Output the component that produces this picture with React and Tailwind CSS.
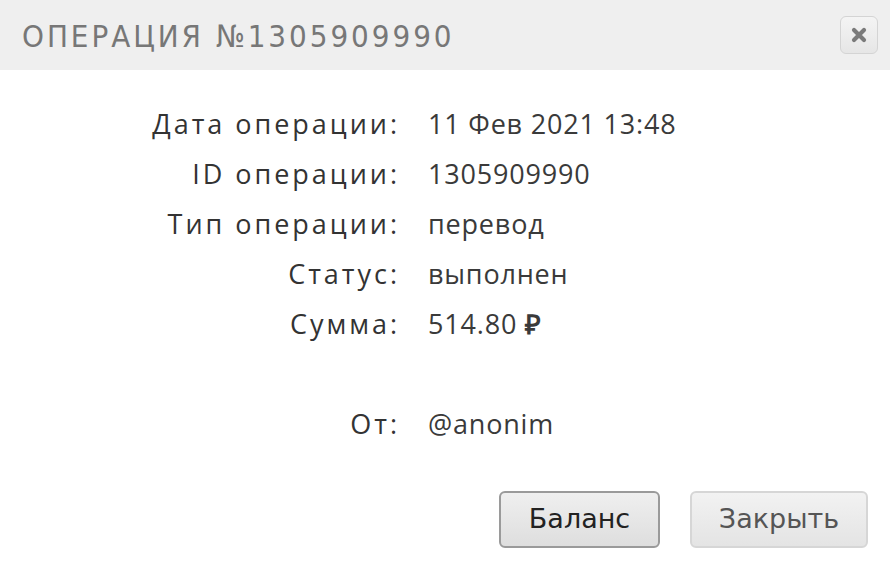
import React from 'react';

const rows = [
  ['Дата операции:', '11 Фев 2021 13:48'],
  ['ID операции:', '1305909990'],
  ['Тип операции:', 'перевод'],
  ['Статус:', 'выполнен'],
  ['Сумма:', <>514.80 <span className="font-bold">₽</span></>],
];

export default function App() {
  return (
    <div className="w-[890px] h-[562px] bg-white overflow-hidden">
      {/* Header */}
      <div className="h-[70px] bg-[#efefef] flex items-center justify-between pl-[22px] pr-[12px]">
        <h1 className="text-[31px] tracking-[0.095em] text-[#777] leading-none pt-[2px] [font-stretch:condensed] font-['DejaVu_Sans_Condensed','DejaVu_Sans',sans-serif]">
          ОПЕРАЦИЯ №1305909990
        </h1>
        <button className="w-[38px] h-[38px] rounded-[6px] border border-[#d4d4d4] bg-gradient-to-b from-[#f4f4f4] to-[#e6e6e6] flex items-center justify-center">
          <svg width="18" height="18" viewBox="0 0 18 18">
            <path d="M4 4 L14 14 M14 4 L4 14" stroke="#7a7a7a" strokeWidth="4.2" strokeLinecap="round" />
          </svg>
        </button>
      </div>

      {/* Details */}
      <div className="pt-[29px] text-[27px] text-[#333] font-['Open_Sans',sans-serif]">
        {rows.map(([label, value], i) => (
          <div key={i} className="flex h-[50px] items-center">
            <div className="w-[400px] text-right tracking-[0.11em]">{label}</div>
            <div className="pl-[28px] tracking-[0.03em] text-[#3a3a3a]">{value}</div>
          </div>
        ))}
        <div className="h-[50px]" />
        <div className="flex h-[50px] items-center">
          <div className="w-[400px] text-right tracking-[0.11em]">От:</div>
          <div className="pl-[28px] tracking-[0.03em] text-[#3a3a3a]">@anonim</div>
        </div>
      </div>

      {/* Buttons */}
      <div className="flex justify-end gap-[30px] pr-[22px] pt-[42px] font-['DejaVu_Sans',sans-serif] text-[27px]">
        <button className="w-[161px] h-[57px] rounded-[6px] border-2 border-[#9a9a9a] bg-gradient-to-b from-[#efefef] to-[#dedede] text-[#222]">
          Баланс
        </button>
        <button className="w-[178px] h-[57px] rounded-[6px] border-2 border-[#d6d6d6] bg-gradient-to-b from-[#f2f2f2] to-[#e4e4e4] text-[#555]">
          Закрыть
        </button>
      </div>
    </div>
  );
}
